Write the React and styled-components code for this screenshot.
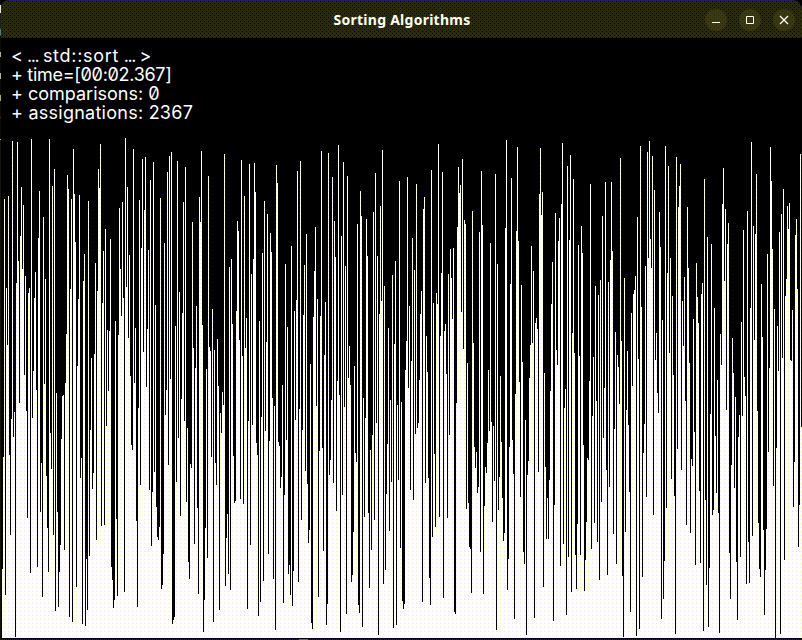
import React from 'react';
import styled, { createGlobalStyle } from 'styled-components';

const Global = createGlobalStyle`
  html, body { margin: 0; background: #000; overflow: hidden; }
  * { box-sizing: border-box; }
`;

const TOP = 38;
const WIDTH = 800;
const HEIGHT = 600;

/* Bar tops in thirds of a pixel, measured down from the top of the bar area. */
const levels = `
1318 981 207 1395 474 645 198 975 1215 867 33 921 846 1521 459 36 393 819 318 171 417 225 735 438 843 1164 489 474 1329 27 864 723 504 426 780 1311 324 183 1146 999 1401 261 762 447 1038 1194 1326 27 909 1017 168 1215 117 1443 789 1146 1431 1326 1245 927 798 795 1260 759 612 135 177 1461 477 207 1476 57 192 336 1371 708 507 195 1044 984 1482 453 372 1488 1287 1440 213 1278 900 684 1077 1029 672 399 1230 483 117 174 42 1188 519 363 1185 297 888 600 783 603 327 1311 1350 1434 1410 573 1167 1398 615 234 417 558 216 504 1386 24 471 171 624 375 738 945 960 57 759
594 1173 1431 834 210 1065 354 87 666 240 81 771 597 360 1080 150 1248 1086 96 1026 525 1131 1221 1230 1191 204 1377 1365 1272 339 855 780 126 1005 78 747 66 1482 1470 1461 588 1056 93 924 486 1158 807 549 216 873 111 1116 894 1296 1347 1002 1014 276 654 1242 714 528 1134 1392 201 276 63 585 1506 1410 1194 717 1284 138 651 663 981 537 1476 660 999 1065 627 768 1440 849 909 786 825 72 1368 1224 1152 1332 411 1380 387 582 978 1119 1113 543 273 303 630 1107 90 678 1122 198 654 564 1437 873 102 1245 432 885 387 99 186 939 975 1458 573 1416 861 369 1353 213 903 636 252 1272 933
309 366 804 1347 828 1500 105 159 936 948 1074 1041 765 1419 1095 402 930 591 1332 1305 1395 348 1428 1323 543 870 510 123 1356 837 93 1170 900 555 405 1023 312 1062 1239 1200 702 1479 1497 561 423 291 828 507 1401 963 558 63 954 1263 675 516 1485 1422 69 1035 990 810 141 1059 273 381 1143 753 45 795 1506 318 1095 96 831 408 1452 138 744 648 765 1356 1335 1206 708 969 996 282 1425 1449 183 258 1491 804 1161 864 267 378 1149 1374 960 1260 915 246 1170 129 879 378 1515 552 228 513 60 1362 468 1320 1092 942 594 1203 810 1056 435 1494 642 393 1485 825 1050 153 1254 816 1413 1437 1422
720 633 141 774 528 1080 693 324 1110 420 912 162 894 879 750 552 483 1416 237 201 1059 618 726 1044 1344 1425 120 1221 519 972 1191 489 522 42 1161 618 429 126 1404 603 582 732 1164 432 915 357 444 567 354 1446 1452 819 291 111 189 165 546 87 657 270 282 1137 699 1119 1251 1257 1389 243 639 951 1014 966 1089 1071 306 1266 123 285 1392 1128 1011 1029 939 720 903 339 876 1176 888 1053 132 1500 402 1140 1041 738 936 1104 1233 1209 294 30 1380 1287 951 462 144 930 1032 1467 792 303 51 333 756 1101 465 696 1266 1302 870 1515 1035 993 744 645 348 639 423 1464 579 564 597 1026 192
54 255 186 1371 729 1011 1227 1104 1227 1050 783 522 396 1473 1125 249 660 705 333 264 1308 222 39 1242 834 777 1455 108 1281 330 75 1386 609 147 669 1275 1377 1182 345 678 1275 288 369 945 1383 1290 1176 984 990 753 162 1257 858 681 1179 468 813 1236 495 1350 450 1116 258 924 774 156 1020 1335 456 1071 390 156 363 1212 897 606 1302 675 711 822 84 633 1338 1521 444 1206 840 663 885 1086 1446 549 768 492 480 438 1518 261 687 1497 48 531 1341 969 882 408 1101 66 384 33 327 414 78 1155 180 690 609 789 849 246 351 1467 570 1407 1293 48 1134 429 108 669 384 1047 498 735 1098
1512 81 957 231 168 102 1020 513 648 441 813 1185 231 414 699 1209 987 1008 567 906 1305 399 501 579 1083 1299 492 459 1503 147 1110 1365 321 1491 1314 852 342 1155 1140 534 918 1089 750 1149 1509 612 705 222 114 453 237 840 342 279 1269 1407 1005 624 729 1074 801 1296 1470 921 855 1281 576 858 300 741 798 1362 243 1236 1359 534 36 1218 288 630 312 132 843 1179 1317 1341 462 621 1200 1455 1320 1197 372 966 714 51 153 357 1068 537 1524 954 588 723 306 1512 252 684 177 1290 498 447 228 297 219 690 693 540 1131 996 315 267 477 1251 1125 72 891
`.trim().split(/\s+/).map((v) => Math.round(Number(v) / 3) + 130 - TOP);

const barsPath = levels.map((y, i) => `M${i} ${y}h1V${HEIGHT}h-1z`).join('');

const Window = styled.div`
  width: 802px;
  height: 640px;
  display: grid;
  grid-template-columns: 2px 800px;
  grid-template-rows: ${TOP}px ${HEIGHT}px 2px;
  background: #000;
`;

const TitleBar = styled.header`
  grid-column: 1 / 3;
  grid-row: 1;
  display: grid;
  grid-template-columns: 1fr auto 1fr;
  align-items: center;
  padding-right: 7px;
  border-top: 1px solid #24205a;
  border-radius: 9px 9px 0 0;
  background:
    conic-gradient(from 270deg at 1px 1px, #080800 25%, transparent 0) 0 0 / 4px 4px,
    conic-gradient(from 270deg at 1px 1px, #080800 25%, transparent 0) 2px 2px / 4px 4px,
    conic-gradient(from 270deg at 1px 1px, #1b1b38 25%, transparent 0) 2px 0 / 8px 4px,
    #2a2a0c;
`;

const Title = styled.h1`
  grid-column: 2;
  margin: 0;
  width: 138px;
  transform: translateX(5px);
  white-space: nowrap;
  font: 700 14px/20px "Noto Sans", sans-serif;
  letter-spacing: 0.26px;
  color: #fffff0;
`;

const Controls = styled.div`
  display: flex;
  justify-content: flex-end;
  gap: 12px;
`;

const Control = styled.button`
  width: 22px;
  height: 22px;
  padding: 0;
  border: 0;
  border-radius: 50%;
  background: rgba(72, 70, 24, 0.55);
  color: #fffff0;
  svg { display: block; }
`;

/* Slivers of the desktop that show along the left edge. */
const DesktopEdge = styled.div`
  grid-column: 1;
  grid-row: 1 / 4;
  z-index: 1;
  width: 1px;
  background: linear-gradient(
    #101008 5px, #e4e8dc 5px 13px, #182018 13px 28px, #4c8088 30px 35px,
    #0c0c04 36px 52px, #b0b0a0 52px 57px, #0c0c04 57px 73px, #b0b0a0 73px 79px,
    #0c0c04 79px 95px, #a8a870 95px 101px, #0c0c04 101px 117px, #706050 118px,
    #0c0c04 118px 139px, #b0b0a0 139px 140px, #14140a 140px);
`;

const BottomEdge = styled.div`
  grid-column: 1 / 3;
  grid-row: 3;
  background:
    linear-gradient(#6c6c5c, #6c6c5c) 299px 1px / 9px 1px no-repeat,
    repeating-linear-gradient(90deg, #2a2a0c 0 1px, #080800 1px 2px) 0 1px / 100% 1px no-repeat,
    #000;
`;

const Body = styled.main`
  grid-column: 2;
  grid-row: 2;
  display: grid;
  > * { grid-area: 1 / 1; }
`;

const Stats = styled.div`
  padding: 8px 0 0 9px;
  z-index: 1;
`;

const Line = styled.p`
  margin: 0;
  height: 19px;
  white-space: pre;
  font: 400 18px/19px "Inter", sans-serif;
  font-feature-settings: "zero";
  letter-spacing: ${(p) => p.$track}px;
  color: #fff;
`;

const Word = styled.span`
  letter-spacing: ${(p) => p.$track}px;
`;

export default function App() {
  return (
    <>
      <Global />
      <Window>
        <TitleBar>
          <Title>Sorting Algorithms</Title>
          <Controls>
            <Control aria-label="Minimize">
              <svg width="22" height="22"><path d="M7 13.5h8" stroke="currentColor" /></svg>
            </Control>
            <Control aria-label="Maximize">
              <svg width="22" height="22"><path d="M7.5 7.5h7v7h-7z" fill="none" stroke="currentColor" /></svg>
            </Control>
            <Control aria-label="Close">
              <svg width="22" height="22"><path d="M7 7l8 8M15 7l-8 8" stroke="currentColor" strokeWidth="1.3" /></svg>
            </Control>
          </Controls>
        </TitleBar>
        <DesktopEdge />
        <Body>
          <svg width={WIDTH} height={HEIGHT} shapeRendering="crispEdges">
            <defs>
              <pattern id="dither" width="4" height="4" patternUnits="userSpaceOnUse">
                <rect width="4" height="4" fill="#fefefc" />
                <rect x="2" y="1" width="1" height="1" fill="#ffff66" />
              </pattern>
            </defs>
            <path d={barsPath} fill="url(#dither)" />
          </svg>
          <Stats>
            <Line $track={-0.5}>
              {'< '}<Word $track={-1.4}>...</Word> <Word $track={0.7}>std::sort</Word> <Word $track={-1.4}>...</Word>{' >'}
            </Line>
            <Line $track={-0.3}>+ time=[00:02.367]</Line>
            <Line $track={0}>+ comparisons: 0</Line>
            <Line $track={0.25}>+ assignations: 2367</Line>
          </Stats>
        </Body>
        <BottomEdge />
      </Window>
    </>
  );
}
